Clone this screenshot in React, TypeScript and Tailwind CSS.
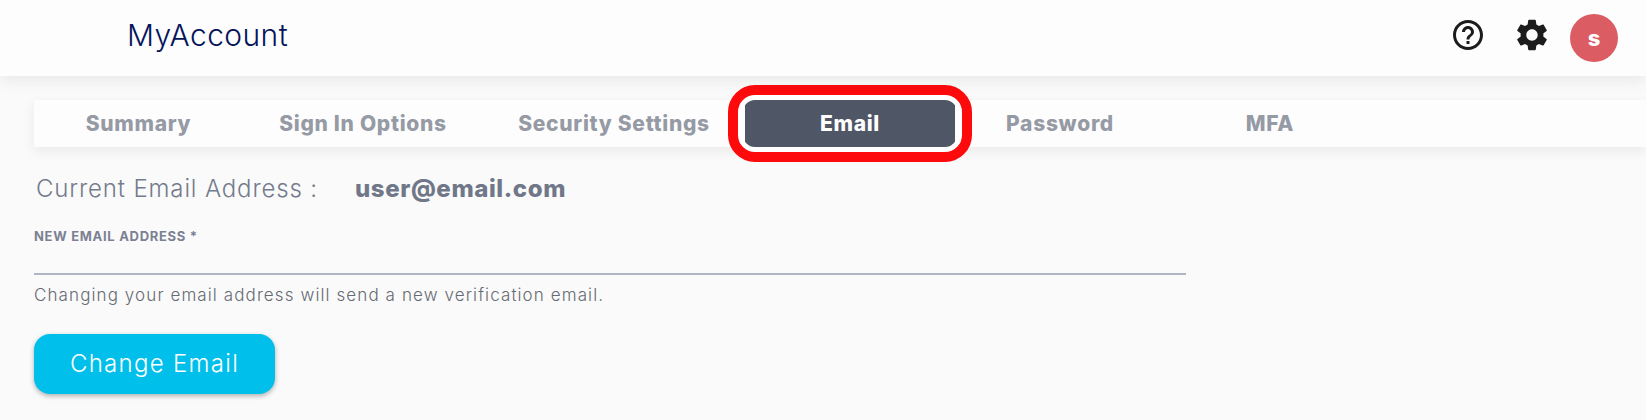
import React from 'react';

const tabs = [
  { label: 'Summary', width: 'w-[209px]' },
  { label: 'Sign In Options', width: 'w-[240px]' },
  { label: 'Security Settings', width: 'w-[262px]' },
  { label: 'Email', width: 'w-[210px]', active: true },
  { label: 'Password', width: 'w-[210px]' },
  { label: 'MFA', width: 'w-[210px]' },
];

const App: React.FC = () => {
  return (
    <div className="w-[1646px] h-[420px] overflow-hidden bg-[#fafafa] font-['Inter',sans-serif]">
      {/* ヘッダー */}
      <header className="relative z-10 h-[76px] bg-[#fdfdfd] shadow-[0_4px_16px_rgba(0,0,0,0.08)] flex items-center pl-[127px] pr-[28px]">
        <h1 className="text-[30px] font-light text-[#05155c] tracking-[0.4px] -mt-[6px]">MyAccount</h1>
        <div className="ml-auto flex items-center">
          <svg viewBox="0 0 24 24" className="w-[36px] h-[36px] text-[#1c1c1c] -mt-[6px]" fill="currentColor">
            <path d="M11 18h2v-2h-2v2zm1-16C6.48 2 2 6.48 2 12s4.48 10 10 10 10-4.48 10-10S17.52 2 12 2zm0 18c-4.41 0-8-3.59-8-8s3.59-8 8-8 8 3.59 8 8-3.59 8-8 8zm0-14c-2.21 0-4 1.79-4 4h2c0-1.1.9-2 2-2s2 .9 2 2c0 2-3 1.75-3 5h2c0-2.25 3-2.5 3-5 0-2.21-1.79-4-4-4z" />
          </svg>
          <svg viewBox="0 0 24 24" className="ml-[27px] w-[38px] h-[38px] text-[#1c1c1c] -mt-[6px]" fill="currentColor">
            <path d="M19.14 12.94c.04-.3.06-.61.06-.94 0-.32-.02-.64-.07-.94l2.03-1.58c.18-.14.23-.41.12-.61l-1.92-3.32c-.12-.22-.37-.29-.59-.22l-2.39.96c-.5-.38-1.03-.7-1.62-.94l-.36-2.54c-.04-.24-.24-.41-.48-.41h-3.84c-.24 0-.43.17-.47.41l-.36 2.54c-.59.24-1.13.57-1.62.94l-2.39-.96c-.22-.08-.47 0-.59.22L2.74 8.87c-.12.21-.08.47.12.61l2.03 1.58c-.05.3-.09.63-.09.94s.02.64.07.94l-2.03 1.58c-.18.14-.23.41-.12.61l1.92 3.32c.12.22.37.29.59.22l2.39-.96c.5.38 1.03.7 1.62.94l.36 2.54c.05.24.24.41.48.41h3.84c.24 0 .44-.17.47-.41l.36-2.54c.59-.24 1.13-.56 1.62-.94l2.39.96c.22.08.47 0 .59-.22l1.92-3.32c.12-.22.07-.47-.12-.61l-2.01-1.58zM12 15.6c-1.98 0-3.6-1.62-3.6-3.6s1.62-3.6 3.6-3.6 3.6 1.62 3.6 3.6-1.62 3.6-3.6 3.6z" />
          </svg>
          <div className="ml-[19px] w-[48px] h-[48px] rounded-full bg-[#dc5c63] flex items-center justify-center text-white text-[22px] font-extrabold">
            s
          </div>
        </div>
      </header>

      <main className="pl-[34px]">
        {/* タブ */}
        <nav className="mt-[24px] h-[47px] bg-[#fdfdfd] flex shadow-[0_4px_12px_rgba(0,0,0,0.07)]">
          {tabs.map((tab) => (
            <div
              key={tab.label}
              className={`${tab.width} relative flex items-center justify-center text-[21px] tracking-[0.7px] font-extrabold ${
                tab.active ? 'bg-[#4f5666] text-white rounded-[5px]' : 'text-[#959aa5]'
              }`}
            >
              {tab.label}
              {tab.active && (
                <span className="absolute -inset-x-[17px] -inset-y-[15px] rounded-[27px] border-[10px] border-[#fd0a0d] shadow-[inset_0_0_0_5px_#ffffff]" />
              )}
            </div>
          ))}
        </nav>

        <div className="mt-[27px] flex items-center text-[#6f7788] h-[30px]">
          <span className="ml-[2px] w-[319px] text-[24px] tracking-[0.85px] font-light text-[#737b8c]">Current Email Address :</span>
          <span className="text-[24px] tracking-[0.6px] font-extrabold">user@email.com</span>
        </div>

        <label className="block mt-[24px] text-[13px] tracking-[0.7px] leading-[16px] font-bold text-[#7b8193]">
          NEW EMAIL ADDRESS *
        </label>
        <div className="mt-[29px] w-[1152px] h-[2px] bg-[#b0b4c3]" />
        <p className="mt-[9px] text-[17px] tracking-[1.1px] leading-[22px] font-light text-[#666a73]">
          Changing your email address will send a new verification email.
        </p>

        <button className="mt-[28px] w-[241px] h-[60px] rounded-[16px] bg-[#00c0eb] text-white text-[24px] tracking-[1.3px] font-light shadow-[0_2px_5px_rgba(0,0,0,0.3)]">
          Change Email
        </button>
      </main>
    </div>
  );
};

export default App;
